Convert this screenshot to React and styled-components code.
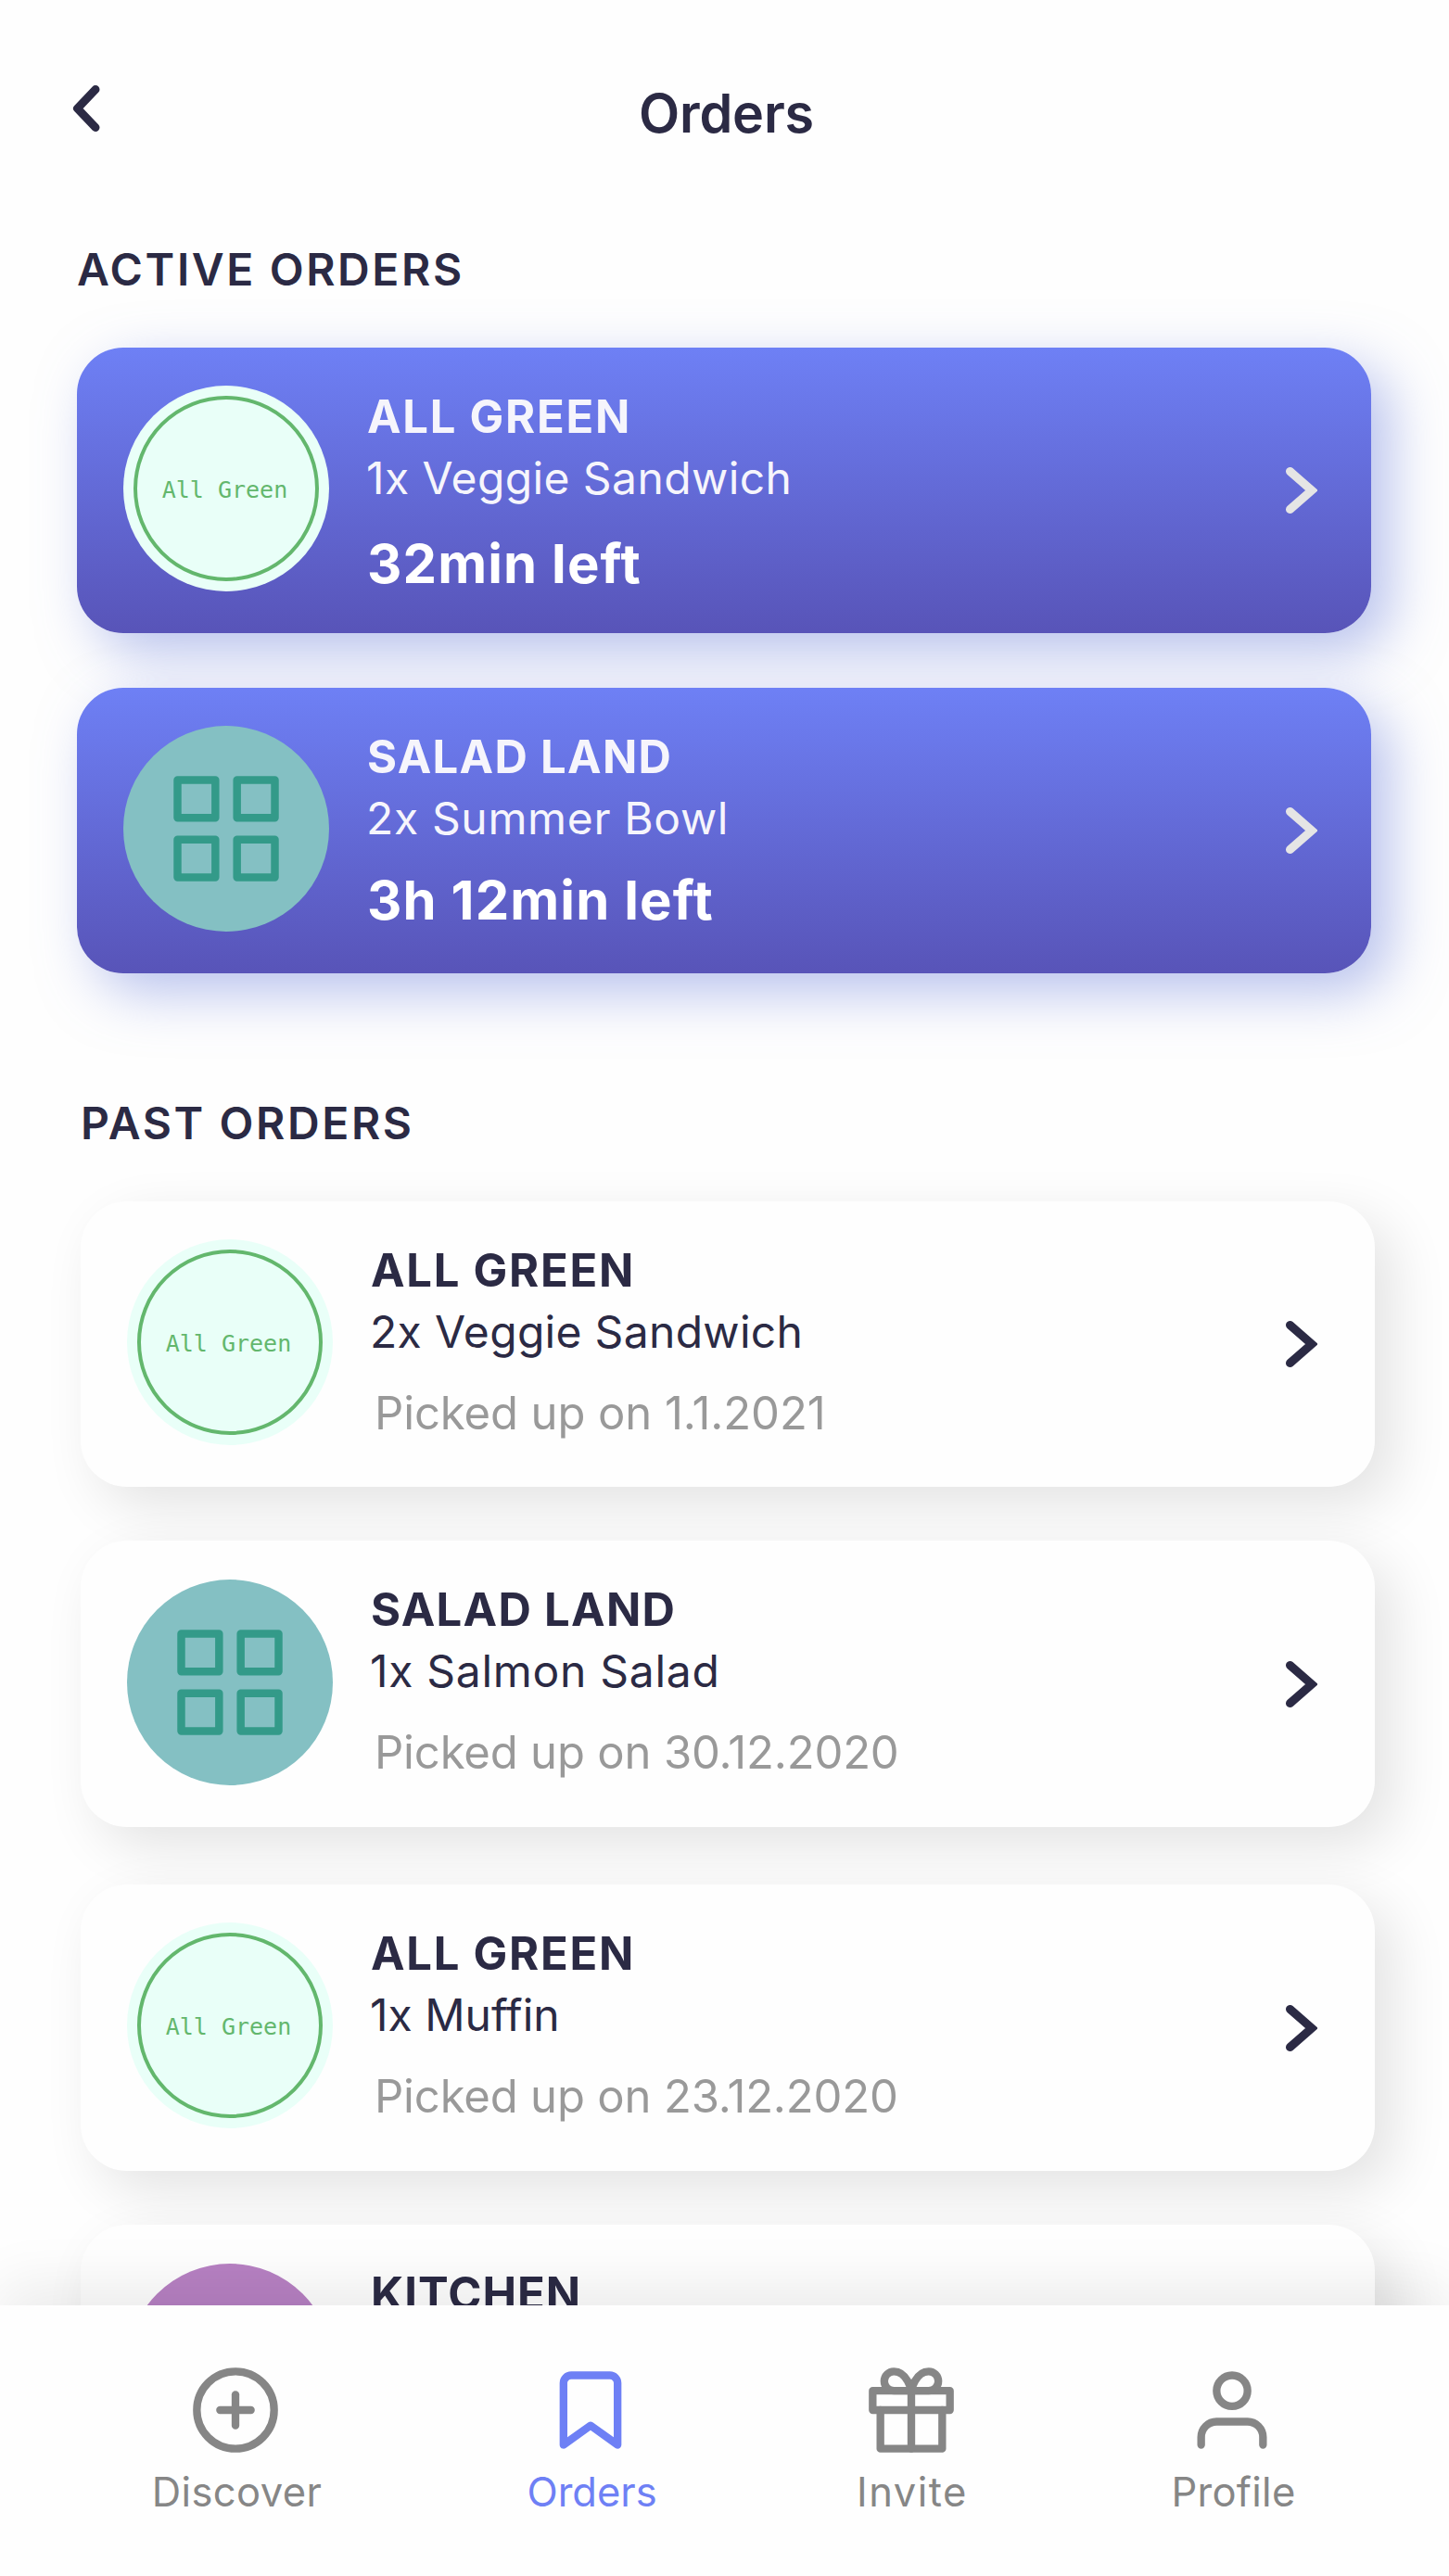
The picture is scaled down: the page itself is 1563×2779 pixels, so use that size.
import React from 'react';
import styled, { createGlobalStyle } from 'styled-components';
import { FiBookmark, FiGift, FiGrid, FiPlusCircle, FiUser } from 'react-icons/fi';

const GlobalStyle = createGlobalStyle`
  *, *::before, *::after { box-sizing: border-box; }
  body {
    margin: 0;
    background: #fefefe;
    color: #2b2a44;
    font-family: Inter, Roboto, "Liberation Sans", sans-serif;
  }
  button { border: 0; padding: 0; background: none; color: inherit; font: inherit; }
`;

const Screen = styled.div`
  display: flex;
  flex-direction: column;
  width: 1563px;
  height: 2779px;
  overflow: hidden;
  background: #fefefe;
`;

const Content = styled.main`
  flex: 1;
  min-height: 0;
  overflow: hidden;
`;

const Header = styled.header`
  display: grid;
  grid-template-columns: 1fr auto 1fr;
  align-items: center;
  height: 243px;
  padding: 0 74px 0 78px;
`;

const BackButton = styled.button`
  display: flex;
  justify-self: start;
  margin-bottom: 9px;
`;

const Title = styled.h1`
  margin: 0;
  font-size: 57.5px;
  font-weight: 600;
  line-height: 70px;
  letter-spacing: -0.2px;
`;

const Section = styled.section`
  width: 1396px;
  margin-left: ${(p) => p.$left}px;
  padding-top: ${(p) => p.$top}px;
`;

const SectionTitle = styled.h2`
  margin: 0 0 ${(p) => p.$gap}px;
  font-size: 48px;
  font-weight: 600;
  line-height: 60px;
  letter-spacing: 2.6px;
`;

const Card = styled.article`
  display: flex;
  align-items: flex-start;
  height: ${(p) => p.$height}px;
  margin-bottom: ${(p) => p.$after}px;
  padding-left: 50px;
  padding-right: ${(p) => (p.$active ? 58 : 62)}px;
  border-radius: 50px;
  color: ${(p) => (p.$active ? '#f6f5fc' : '#2b2a44')};
  background: ${(p) => (p.$active ? 'linear-gradient(180deg, #6e80f5 0%, #5854b8 100%)' : '#fefefe')};
  box-shadow: 20px 20px 60px ${(p) => (p.$active ? 'rgba(113, 133, 221, 0.5)' : 'rgba(0, 0, 0, 0.11)')};
`;

const Logo = styled.div`
  display: flex;
  flex: none;
  align-items: center;
  justify-content: center;
  width: 222px;
  height: 222px;
  margin-top: ${(p) => (p.$low ? 42 : 41)}px;
  border-radius: 50%;
  color: #339a89;
  background: ${(p) => p.$fill};
`;

const LogoRing = styled.div`
  display: flex;
  align-items: center;
  justify-content: center;
  width: 200px;
  height: 200px;
  padding: 3px 3px 0 0;
  border: 4px solid #63b76d;
  border-radius: 50%;
  color: #63b76d;
  font: 25px/30px "DejaVu Sans Mono", monospace;
  white-space: nowrap;
`;

const Details = styled.div`
  flex: 1;
  padding: 45px 0 0 40px;
  white-space: nowrap;
`;

const Vendor = styled.h3`
  margin: 0;
  padding-left: 1px;
  font-size: 49px;
  font-weight: 700;
  line-height: 60px;
  letter-spacing: ${(p) => p.$spacing}px;
`;

const Item = styled.p`
  margin: 6px 0 0;
  font-size: 48px;
  line-height: 60px;
  letter-spacing: ${(p) => p.$spacing}px;
`;

const TimeLeft = styled.p`
  margin: ${(p) => p.$gap}px 0 0;
  padding-left: 1px;
  color: #fff;
  font-size: 58px;
  font-weight: 700;
  line-height: 70px;
  letter-spacing: 1.1px;
`;

const PickedUp = styled.p`
  margin: 28px 0 0;
  padding-left: 5px;
  color: #999;
  font-size: 49px;
  line-height: 60px;
  letter-spacing: ${(p) => p.$spacing}px;
`;

const Chevron = styled.svg`
  flex: none;
  align-self: center;
  fill: none;
  stroke: ${(p) => p.$color};
  stroke-width: 9px;
  stroke-linecap: round;
  stroke-linejoin: ${(p) => p.$join};
`;

const Nav = styled.nav`
  position: relative;
  display: grid;
  flex: none;
  grid-template-columns: 420px 346px 345px 348px;
  height: 292px;
  padding: 63px 0 0 44px;
  background: #fefefe;
  box-shadow: 0 -20px 60px rgba(0, 0, 0, 0.08);
`;

const Tab = styled.button`
  display: flex;
  flex-direction: column;
  align-items: center;
  color: ${(p) => (p.$current ? '#6e80f5' : '#868686')};

  svg { width: 100px; height: 100px; }
`;

const TabLabel = styled.span`
  margin-top: 12px;
  padding-left: 3px;
  font-size: 43.5px;
  line-height: 52px;
  letter-spacing: ${(p) => p.$spacing}px;
`;

const activeOrders = [
  { vendor: 'ALL GREEN', vendorSpacing: 1.75, item: '1x Veggie Sandwich', itemSpacing: 0.4, time: '32min left', timeGap: 27, logo: 'green', height: 308, after: 59 },
  { vendor: 'SALAD LAND', vendorSpacing: 1.3, item: '2x Summer Bowl', itemSpacing: 0.65, time: '3h 12min left', timeGap: 23, logo: 'salad', height: 308, after: 0 },
];

const pastOrders = [
  { vendor: 'ALL GREEN', vendorSpacing: 1.75, item: '2x Veggie Sandwich', itemSpacing: 0.3, date: '1.1.2021', dateSpacing: -0.1, logo: 'green', height: 308, after: 58 },
  { vendor: 'SALAD LAND', vendorSpacing: 1.3, item: '1x Salmon Salad', itemSpacing: 0.7, date: '30.12.2020', dateSpacing: -0.17, logo: 'salad', height: 309, after: 62 },
  { vendor: 'ALL GREEN', vendorSpacing: 1.75, item: '1x Muffin', itemSpacing: 0, date: '23.12.2020', dateSpacing: -0.17, logo: 'green', height: 309, after: 58 },
  { vendor: 'KITCHEN', vendorSpacing: 1, logo: 'kitchen', height: 309, after: 0 },
];

const tabs = [
  { label: 'Discover', Icon: FiPlusCircle, spacing: 0.4 },
  { label: 'Orders', Icon: FiBookmark, spacing: 0 },
  { label: 'Invite', Icon: FiGift, spacing: 1.5 },
  { label: 'Profile', Icon: FiUser, spacing: 0.3 },
];

function VendorLogo({ kind, low }) {
  if (kind === 'green') {
    return (
      <Logo $fill="#e9fff8">
        <LogoRing>All Green</LogoRing>
      </Logo>
    );
  }
  if (kind === 'salad') {
    return (
      <Logo $fill="#84c0c3" $low={low}>
        <FiGrid size={140} strokeWidth={1.45} />
      </Logo>
    );
  }
  return <Logo $fill="#b781c3" $low={low} />;
}

function OrderCard({ order, active }) {
  return (
    <Card $active={active} $height={order.height} $after={order.after}>
      <VendorLogo kind={order.logo} low={!active} />
      <Details>
        <Vendor $spacing={order.vendorSpacing}>{order.vendor}</Vendor>
        {order.item && <Item $spacing={order.itemSpacing}>{order.item}</Item>}
        {order.time && <TimeLeft $gap={order.timeGap}>{order.time}</TimeLeft>}
        {order.date && <PickedUp $spacing={order.dateSpacing}>Picked up on {order.date}</PickedUp>}
      </Details>
      <Chevron $color={active ? '#e5e5e5' : '#2b2a44'} $join="miter" width="34" height="50" viewBox="0 0 34 50">
        <path d="M4.5 4.5 28 25 4.5 45.5" />
      </Chevron>
    </Card>
  );
}

export default function App() {
  return (
    <Screen>
      <GlobalStyle />
      <Content>
        <Header>
          <BackButton aria-label="Back">
            <Chevron $color="#2b2a44" $join="round" width="30" height="50" viewBox="0 0 30 50">
              <path d="M25 4.5 5.5 25 25 45.5" />
            </Chevron>
          </BackButton>
          <Title>Orders</Title>
        </Header>
        <Section $left={83} $top={18}>
          <SectionTitle $gap={54}>ACTIVE ORDERS</SectionTitle>
          {activeOrders.map((order) => (
            <OrderCard key={order.item} order={order} active />
          ))}
        </Section>
        <Section $left={87} $top={132}>
          <SectionTitle $gap={54}>PAST ORDERS</SectionTitle>
          {pastOrders.map((order, i) => (
            <OrderCard key={i} order={order} />
          ))}
        </Section>
      </Content>
      <Nav>
        {tabs.map(({ label, Icon, spacing }) => (
          <Tab key={label} $current={label === 'Orders'}>
            <Icon />
            <TabLabel $spacing={spacing}>{label}</TabLabel>
          </Tab>
        ))}
      </Nav>
    </Screen>
  );
}
